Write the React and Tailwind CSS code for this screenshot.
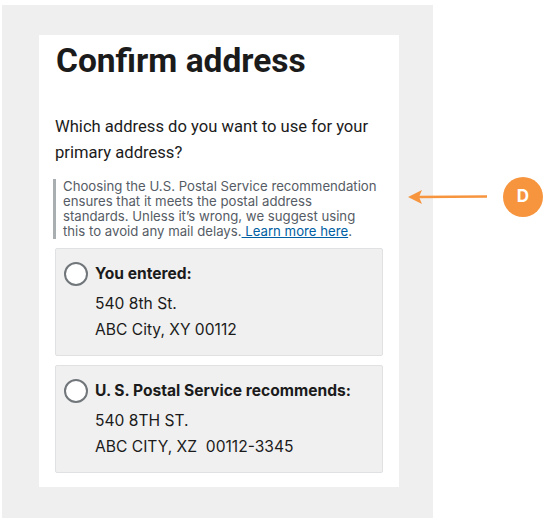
import React from "react";

const Option = ({ title, lines }) => {
  return (
    <label className="flex gap-[7px] border border-[#dfe1e2] bg-[#f0f0f0] rounded-[2px] pl-[8px] pr-3 pt-[13px] pb-[12px]">
      <span className="w-[24px] h-[24px] shrink-0 rounded-full border-2 border-[#71767a] bg-white" />
      <span className="flex flex-col">
        <span className="text-[15.6px] leading-[24px] font-bold text-[#1b1b1b]">{title}</span>
        <span className="mt-[5px] text-[15.6px] leading-[26px] text-[#1b1b1b] whitespace-pre">
          {lines.map((l) => (
            <span key={l} className="block">
              {l}
            </span>
          ))}
        </span>
      </span>
    </label>
  );
};

export default function App() {
  return (
    <div className="relative w-[549px] h-[525px] bg-white font-['Inter',sans-serif]">
      <div className="ml-[2px] pt-[5px]">
        <div className="w-[431px] h-[513px] bg-[#efefef] pl-[37px] pt-[30px]">
          <div className="w-[360px] h-[452px] bg-white pl-[16px] pr-[16px] pt-[6px]">
            <h1 className="ml-[1px] font-['Roboto',sans-serif] text-[33.5px] leading-[40px] font-bold text-[#1b1b1b]">
              Confirm address
            </h1>
            <p className="mt-[33px] font-['Roboto',sans-serif] text-[16.6px] leading-[26px] text-[#1b1b1b]">
              Which address do you want to use for your
              <br />
              primary address?
            </p>
            <div className="mt-[13px] -ml-[2px] border-l-[3px] border-[#a9aeb1] pl-[7px] text-[13.2px] leading-[15px] text-[#565c65]">
              Choosing the U.S. Postal Service recommendation
              <br />
              ensures that it meets the postal address
              <br />
              standards. Unless it’s wrong, we suggest using
              <br />
              this to avoid any mail delays.
              <a href="#" className="text-[#005ea2] underline"> Learn more here</a>.
            </div>
            <div className="mt-[9px] flex flex-col gap-[9px]">
              <Option title="You entered:" lines={["540 8th St.", "ABC City, XY 00112"]} />
              <Option
                title="U. S. Postal Service recommends:"
                lines={["540 8TH ST.", "ABC CITY, XZ  00112-3345"]}
              />
            </div>
          </div>
        </div>
      </div>
      <div className="absolute left-[407px] top-[177px] flex items-center">
        <svg width="82" height="40" viewBox="0 0 82 40">
          <line x1="10" y1="20" x2="80" y2="19.5" stroke="#f7953f" strokeWidth="2.5" />
          <polygon points="1,20 15,13 12,20 15,27" fill="#f7953f" />
        </svg>
        <div className="ml-[14px] w-[40px] h-[40px] rounded-full bg-[#f7953f] text-white text-[17px] font-bold flex items-center justify-center">
          D
        </div>
      </div>
    </div>
  );
}
